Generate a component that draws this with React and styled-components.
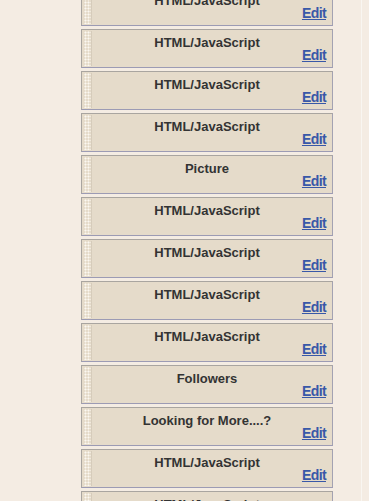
import React from 'react';
import styled, { createGlobalStyle } from 'styled-components';

const GlobalStyle = createGlobalStyle`
  html, body {
    margin: 0;
    padding: 0;
    background-color: #f4ece3;
    overflow: hidden;
  }
`;

const Page = styled.div`
  width: 361px;
  height: 501px;
  border-right: 1px solid #f9f6f1;
  background-color: #f4ece3;
  overflow: hidden;
  font-family: 'Liberation Sans', Arial, sans-serif;
`;

const Column = styled.div`
  width: 252px;
  margin-left: 81px;
  margin-top: -13px;
  display: flex;
  flex-direction: column;
  gap: 3px;
`;

const Widget = styled.div`
  position: relative;
  box-sizing: border-box;
  height: 39px;
  background-color: #e5dbca;
  border: 1px solid #a9a5a0;
  border-bottom-color: #9c9bb4;
  border-right-color: #a3a2b2;
  padding: 5px 6px 0 12px;
  display: flex;
  flex-direction: column;
`;

const DragHandle = styled.div`
  position: absolute;
  left: 2px;
  top: 1px;
  bottom: 1px;
  width: 7px;
  background-image: radial-gradient(circle, #fbf8f2 0.9px, transparent 1.1px);
  background-size: 3px 3px;
  background-position: 0 0;
  border-right: 1px solid #d6ccbb;
`;

const Title = styled.div`
  font-size: 13px;
  font-weight: bold;
  color: #333333;
  text-align: center;
  line-height: 16px;
  margin-left: -6px;
`;

const EditRow = styled.div`
  text-align: right;
  line-height: 15px;
  margin-top: -4px;
`;

const EditLink = styled.a`
  font-size: 14px;
  font-weight: bold;
  letter-spacing: -0.6px;
  color: #3858a8;
  text-decoration: underline;
  cursor: pointer;
`;

const widgets = [
  'HTML/JavaScript',
  'HTML/JavaScript',
  'HTML/JavaScript',
  'HTML/JavaScript',
  'Picture',
  'HTML/JavaScript',
  'HTML/JavaScript',
  'HTML/JavaScript',
  'HTML/JavaScript',
  'Followers',
  'Looking for More....?',
  'HTML/JavaScript',
  'HTML/JavaScript',
];

export default function App() {
  return (
    <>
      <GlobalStyle />
      <Page>
        <Column>
          {widgets.map((name, i) => (
            <Widget key={i}>
              <DragHandle />
              <Title>{name}</Title>
              <EditRow>
                <EditLink>Edit</EditLink>
              </EditRow>
            </Widget>
          ))}
        </Column>
      </Page>
    </>
  );
}
